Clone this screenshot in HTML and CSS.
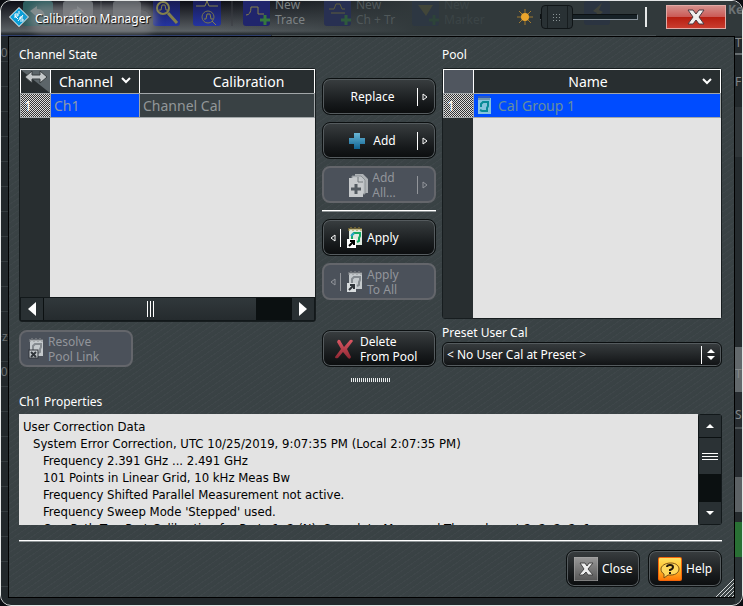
FILE: index.html
```html
<!DOCTYPE html>
<html lang="en">
<head>
<meta charset="utf-8">
<title>Calibration Manager</title>
<link rel="stylesheet" href="styles.css">
</head>
<body>
<svg width="0" height="0" class="defs" aria-hidden="true">
  <defs>
    <pattern id="checker" width="2" height="2" patternUnits="userSpaceOnUse"><path d="M0 0h2v2H0z" fill="#ddd"/><path d="M0 0h1v1H0zM1 1h1v1H1z" fill="#333"/></pattern>
    <linearGradient id="blueTile" x1="0" y1="0" x2="0" y2="1"><stop offset="0" stop-color="#17194c"/><stop offset="1" stop-color="#2434a0"/></linearGradient>
    <linearGradient id="plusFill" x1="0" y1="0" x2="0" y2="1"><stop offset="0" stop-color="#6ab7d6"/><stop offset="1" stop-color="#0e6292"/></linearGradient>
    <linearGradient id="redFill" x1="0" y1="0" x2="0" y2="1"><stop offset="0" stop-color="#dc5864"/><stop offset="1" stop-color="#8e2632"/></linearGradient>
    <linearGradient id="greyFill" x1="0" y1="0" x2="0" y2="1"><stop offset="0" stop-color="#9a9a9a"/><stop offset="1" stop-color="#555"/></linearGradient>
    <linearGradient id="orangeFill" x1="0" y1="0" x2="0" y2="1"><stop offset="0" stop-color="#ffe060"/><stop offset="0.5" stop-color="#ffc02c"/><stop offset="1" stop-color="#ff7a08"/></linearGradient>
    <symbol id="notepad" viewBox="0 0 16 22">
      <rect x="2" y="2" width="13" height="16" fill="#dfe9df"/>
      <path d="M2 1v3M4 0v3M6 1v3M8 0v3M10 1v3M12 0v3M14 1v3" stroke="#a58b34"/>
      <path d="M5 12V8l2-2h6v3l-1 2v3l-2 1" fill="none" stroke="#13a965" stroke-width="2"/>
      <path d="M4 9l3-3" stroke="#27a6c8" stroke-width="2"/>
      <rect x="0" y="12" width="9" height="9" fill="#fff"/>
      <path d="M2 19l4-4M3 14h4v4" fill="none" stroke="#000" stroke-width="2"/>
    </symbol>
    <symbol id="notepad-off" viewBox="0 0 16 22">
      <rect x="2" y="2" width="13" height="16" fill="#c4c9cc"/>
      <path d="M2 1v3M4 0v3M6 1v3M8 0v3M10 1v3M12 0v3M14 1v3" stroke="#8d9092"/>
      <path d="M5 12V8l2-2h6v3l-1 2v3l-2 1" fill="none" stroke="#858b90" stroke-width="2"/>
      <rect x="0" y="12" width="9" height="9" fill="#d8dcde"/>
      <path d="M2 19l4-4M3 14h4v4" fill="none" stroke="#30353a" stroke-width="2"/>
    </symbol>
    <symbol id="notepad-broken" viewBox="0 0 16 22">
      <rect x="2" y="2" width="13" height="16" fill="#c4c9cc"/>
      <path d="M2 1v3M4 0v3M6 1v3M8 0v3M10 1v3M12 0v3M14 1v3" stroke="#8d9092"/>
      <path d="M5 12V8l2-2h6v3l-1 2v3l-2 1" fill="none" stroke="#858b90" stroke-width="2"/>
      <rect x="1" y="12" width="9" height="8" fill="#c4c9cc" stroke="#30353a"/>
      <path d="M3 14l5 5M8 14l-5 5" stroke="#30353a" stroke-width="2"/>
    </symbol>
  </defs>
</svg>

<main class="window">
  <div class="edge edge-left" aria-hidden="true"><svg width="7" height="560"><g fill="#6b7072"><text x="-7" y="20">10</text><text x="1" y="304">z</text><text x="-7" y="339">10</text></g></svg></div>
  <div class="edge edge-right" aria-hidden="true"><svg width="7" height="560"><g fill="#83888a"><text x="0" y="10">T</text><text x="0" y="49">F</text><text x="0" y="341">T</text><text x="0" y="382">S</text></g></svg></div>
  <header class="titlebar">
    <svg class="backdrop" width="743" height="36" aria-hidden="true">
      <rect x="22" y="0" width="30" height="25" rx="3" fill="#2c5c5e"/>
      <path d="M29 10l7-5v3q8 0 8 9-3-5-8-4v3z" fill="#7c8c8c"/>
      <rect x="62" y="0" width="30" height="25" rx="3" fill="#60646a"/>
      <path d="M83 10l-7-5v3q-8 0-8 9 3-5 8-4v3z" fill="#82868a"/>
      <rect x="112" y="0" width="28" height="25" rx="3" fill="#55585e"/>
      <rect x="152" y="-3" width="27" height="28" rx="3" fill="url(#blueTile)"/>
      <circle cx="162" cy="7" r="6" fill="none" stroke="#83804a" stroke-width="2"/>
      <path d="M167 12l9 10" stroke="#83804a" stroke-width="3"/>
      <path d="M158 9h2l1-5h3l1 5h2" fill="none" stroke="#83804a"/>
      <rect x="192" y="-3" width="28" height="28" rx="3" fill="url(#blueTile)"/>
      <circle cx="207" cy="16" r="6" fill="none" stroke="#77754d"/>
      <path d="M195 5h9l2-5 2 5h9M203 18h2l1-5h3l1 5h2M211 20l4 4" fill="none" stroke="#83804a"/>
      <path d="M100 0v25M231 0v25" stroke="#3a3d42"/>
      <rect x="242" y="-3" width="27" height="28" rx="3" fill="#20256c"/>
      <path d="M245 14q5 0 5-8h7v7h6" fill="none" stroke="#85814a"/>
      <path d="M264 14v10M259 19h10" stroke="#35783d" stroke-width="3"/>
      <rect x="323" y="-3" width="27" height="28" rx="3" fill="#283052"/>
      <path d="M330 12h14M328 8h5l2-5h4l2 5h3" fill="none" stroke="#5d5c3c"/>
      <path d="M345 14v10M340 19h10" stroke="#2e5a3c" stroke-width="3"/>
      <rect x="411" y="-3" width="27" height="28" rx="3" fill="#2d3742"/>
      <path d="M417 4h15l-7 11z" fill="#424639"/>
      <path d="M433 14v10M428 19h10" stroke="#2d4339" stroke-width="3"/>
      <rect x="583" y="0" width="26" height="24" rx="3" fill="#2b3441"/>
      <path d="M601 2l-9 8 4 2-5 8 11-9-4-2z" fill="#3f423b"/>
      <g class="backdrop-text">
        <text x="274" y="8" fill="#7d8284">New</text><text x="274" y="23" fill="#7d8284">Trace</text>
        <text x="355" y="8" fill="#50585a">New</text><text x="355" y="23" fill="#50585a">Ch + Tr</text>
        <text x="443" y="8" fill="#3b4446">New</text><text x="443" y="23" fill="#3b4446">Marker</text>
        <text x="727" y="13" fill="#6d7375" font-weight="700">Ke</text>
      </g>
      <path d="M0 34.500h270" stroke="#2d3e6c"/>
      <path d="M271 34.500h384" stroke="#4a5356"/>
    </svg>
    <svg class="logo" width="20" height="20" viewBox="0 0 20 20" aria-hidden="true">
      <path d="M10 0l10 10-10 10L0 10z" fill="#fff"/>
      <path d="M10 1l9 9-9 9-9-9z" fill="#0a9fd8"/>
      <path d="M6 11V7h3v2H6l3 3M14 10h-3v2h3v2h-3M10 4v3M9 14l5-6" fill="none" stroke="#fff"/>
    </svg>
    <h1 class="title"><span>Calibration Manager</span></h1>
    <svg class="sun" width="18" height="18" viewBox="0 0 18 18" aria-hidden="true">
      <path d="M9 1v16M1 9h16M3 3l12 12M15 3L3 15" stroke="#a17a2e"/>
      <circle cx="9" cy="9" r="4" fill="#eaa42c"/>
    </svg>
    <input class="opacity" type="range" min="0" max="100" value="0" aria-label="Transparency">
    <span class="title-rule"></span>
    <button class="window-close" type="button" aria-label="Close window">
      <svg width="18" height="16" viewBox="0 0 18 16"><path d="M1 1h5l3 4 3-4h5l-5 7 5 7h-5l-3-4-3 4H1l5-7z" fill="#f0f0f0" stroke="#4a3b42"/></svg>
    </button>
  </header>

  <div class="panel">
    <div class="upper">
      <h2 class="label">Channel State</h2>
      <span></span>
      <h2 class="label">Pool</h2>

      <div class="frame">
        <div class="list">
          <table>
            <colgroup><col class="col-index"><col class="col-channel"><col></colgroup>
            <thead><tr>
              <th class="corner"><svg width="29" height="23" viewBox="0 0 29 23" aria-label="Resize columns"><path d="M0 0h29v23z" fill="#5c6569"/><path d="M4 7l7-6v4h8V1l7 6-7 6V9h-8v4z" fill="#c4c8c9" stroke="#373d3f"/></svg></th>
              <th class="sort">Channel<svg width="10" height="7" viewBox="0 0 10 7" aria-hidden="true"><path d="M1 1l4 4 4-4" fill="none" stroke="#fff" stroke-width="2"/></svg></th>
              <th class="center">Calibration</th>
            </tr></thead>
            <tbody><tr><th class="index"><svg width="100%" height="100%" shape-rendering="crispEdges" aria-hidden="true"><rect width="100%" height="100%" fill="url(#checker)"/></svg><span>1</span></th><td class="selected">Ch1</td><td class="plain">Channel Cal</td></tr></tbody>
          </table>
        </div>
        <div class="hscroll">
          <button type="button" class="scroll-end" aria-label="Scroll left"><svg width="8" height="14" viewBox="0 0 8 14"><path d="M8 0v14L0 7z" fill="#fff"/></svg></button>
          <div class="hthumb"><i></i><i></i><i></i></div>
          <button type="button" class="scroll-end" aria-label="Scroll right"><svg width="8" height="14" viewBox="0 0 8 14"><path d="M0 0v14l8-7z" fill="#fff"/></svg></button>
        </div>
      </div>

      <div class="actions">
        <button class="btn" type="button"><span class="btn-text">Replace</span><span class="bar"></span><svg width="6" height="8" viewBox="0 0 6 8"><path d="M1 1v6l4-3z" fill="none" stroke="currentColor"/></svg></button>
        <button class="btn" type="button"><span class="btn-text"><svg width="16" height="16" viewBox="0 0 16 16"><path d="M5 0h6v5h5v6h-5v5H5v-5H0V5h5z" fill="url(#plusFill)"/></svg>Add</span><span class="bar"></span><svg width="6" height="8" viewBox="0 0 6 8"><path d="M1 1v6l4-3z" fill="none" stroke="currentColor"/></svg></button>
        <button class="btn" type="button" disabled><span class="btn-text tight"><svg width="19" height="24" viewBox="0 0 19 24"><path d="M6 1h8l5 5v14H6z" fill="#aeb2b5"/><path d="M3 3h9l4 4v14H3z" fill="#bfc3c6" stroke="#8b9094"/><path d="M0 5h9l5 4v15H0z" fill="#c6c9cb"/><path d="M9 4v5h5" fill="none" stroke="#73797d"/><path d="M7 11v10M2 16h10" stroke="#545b61" stroke-width="3"/></svg><span>Add<br>All...</span></span><span class="bar"></span><svg width="6" height="8" viewBox="0 0 6 8"><path d="M1 1v6l4-3z" fill="none" stroke="currentColor"/></svg></button>
        <hr class="rule">
        <button class="btn lead" type="button"><svg width="6" height="8" viewBox="0 0 6 8"><path d="M5 1v6L1 4z" fill="none" stroke="currentColor"/></svg><span class="bar"></span><svg class="pad" width="16" height="22"><use href="#notepad"/></svg>Apply</button>
        <button class="btn lead" type="button" disabled><svg width="6" height="8" viewBox="0 0 6 8"><path d="M5 1v6L1 4z" fill="none" stroke="currentColor"/></svg><span class="bar"></span><svg class="pad" width="16" height="22"><use href="#notepad-off"/></svg><span>Apply<br>To All</span></button>
      </div>

      <div class="frame pool">
        <div class="list">
          <table>
            <colgroup><col class="col-index"><col></colgroup>
            <thead><tr><th class="blank"></th><th class="center name">Name<svg class="caret" width="10" height="7" viewBox="0 0 10 7" aria-hidden="true"><path d="M1 1l4 4 4-4" fill="none" stroke="#fff" stroke-width="2"/></svg></th></tr></thead>
            <tbody><tr><th class="index"><svg width="100%" height="100%" shape-rendering="crispEdges" aria-hidden="true"><rect width="100%" height="100%" fill="url(#checker)"/></svg><span>1</span></th><td class="selected group"><svg width="15" height="18" viewBox="0 0 15 18" aria-hidden="true"><rect x="1" y="2" width="13" height="16" fill="#86c4dc"/><path d="M2 0v4M4 0v4M6 0v4M8 0v4M10 0v4M12 0v4" stroke="#5c6c80"/><path d="M4 11V8l2-2h6M11 7v3l-1 2v3H5l-2-1" fill="none" stroke="#098a96" stroke-width="2"/></svg>Cal Group 1</td></tr></tbody>
          </table>
        </div>
      </div>

      <div class="resolve">
        <button class="btn lead" type="button" disabled><svg width="16" height="22"><use href="#notepad-broken"/></svg><span>Resolve<br>Pool Link</span></button>
      </div>
      <div class="delete">
        <button class="btn lead" type="button"><svg width="18" height="20" viewBox="0 0 18 20"><path d="M3 1q2-1 3 2l3 5 6-7q2-1 3 1l-6 8 4 8q-1 3-3 1l-5-6-5 6q-3 1-3-1l6-8-4-7z" fill="url(#redFill)"/></svg><span>Delete<br>From Pool</span></button>
      </div>
      <div class="preset">
        <label class="label" for="preset">Preset User Cal</label>
        <div class="select">
          <select id="preset"><option>&lt; No User Cal at Preset &gt;</option></select>
          <svg width="14" height="18" viewBox="0 0 14 18" aria-hidden="true"><path d="M0 0h1v18H0zM6 7l4-4 4 4zM6 10h8l-4 4z" fill="#fff"/></svg>
        </div>
      </div>
    </div>

    <div class="grip" role="separator" aria-label="Resize properties"></div>

    <section class="properties">
      <h2 class="label">Ch1 Properties</h2>
      <div class="report">
        <div class="report-text">
          <p>User Correction Data</p>
          <p class="in1">System Error Correction, UTC 10/25/2019, 9:07:35 PM (Local 2:07:35 PM)</p>
          <p class="in2">Frequency 2.391 GHz ... 2.491 GHz</p>
          <p class="in2">101 Points in Linear Grid, 10 kHz Meas Bw</p>
          <p class="in2">Frequency Shifted Parallel Measurement not active.</p>
          <p class="in2">Frequency Sweep Mode 'Stepped' used.</p>
          <p class="in2">One Path Two Port Calibration for Ports 1, 2 (N), Sound. to Measured Through port 2, 2, 2, 2, 1</p>
        </div>
        <div class="vscroll">
          <button type="button" class="scroll-end" aria-label="Scroll up"><svg width="8" height="4" viewBox="0 0 8 4"><path d="M0 4h8L4 0z" fill="#fff"/></svg></button>
          <div class="vthumb"><i></i><i></i><i></i></div>
          <span class="vspace"></span>
          <button type="button" class="scroll-end" aria-label="Scroll down"><svg width="8" height="4" viewBox="0 0 8 4"><path d="M0 0h8L4 4z" fill="#fff"/></svg></button>
        </div>
      </div>
    </section>

    <hr class="rule">
    <footer class="footer">
      <button class="btn lead" type="button"><svg width="24" height="24" viewBox="0 0 24 24"><path d="M0 0h24v24H0z" fill="url(#greyFill)" stroke="#aaa"/><path d="M6 6h5l2 3 2-3h4l-5 6 5 6h-5l-2-3-3 3H5l5-6z" fill="#eee" stroke="#444"/></svg>Close</button>
      <button class="btn lead help" type="button"><svg width="24" height="24" viewBox="0 0 24 24"><rect width="24" height="24" rx="2" fill="#f4660a"/><rect x="1" y="1" width="22" height="22" rx="1" fill="url(#orangeFill)"/><path d="M13 6c5 0 8 3 8 6s-3 6-8 6l-3 0-4 3v-4c-2-1-3-3-3-5 0-3 4-6 10-6z" fill="#ffd85c" stroke="#7b5115"/><path d="M9 10q0-2 3-2t3 2-3 3v1M12 15v2" fill="none" stroke="#20180c" stroke-width="2"/></svg>Help</button>
    </footer>
    <svg class="resize" width="18" height="18" viewBox="0 0 18 18" aria-hidden="true"><path d="M0 18L18 0M4 18L18 4M8 18L18 8M12 18l6-6M16 18l2-2" stroke="#d4d7d8"/></svg>
  </div>
</main>
</body>
</html>
```
FILE: styles.css
```css
* { box-sizing: border-box; }
body {
  margin: 0;
  background: #0c0d12;
  color: #fff;
  font: 12px/15px "Noto Sans", "Open Sans", sans-serif;
}
h1, h2, p, hr { margin: 0; }
h1, h2 { font-size: 12px; font-weight: 400; }
button, select, input { font: inherit; margin: 0; }
svg { flex: none; }
.defs { position: absolute; }

.window {
  position: relative;
  display: flex;
  flex-direction: column;
  min-height: 100vh;
  padding: 0 7px 7px;
  border: 1px solid #e4e6e6;
  border-radius: 11px;
  background: #22282b;
  overflow: hidden;
}
.edge { position: absolute; top: 36px; bottom: 0; width: 7px; overflow: hidden; }
.edge-left { left: 0; background: repeating-linear-gradient(#22282b 0 24px, #343b3e 24px 25px); }
.edge-right {
  right: 0;
  background: linear-gradient(#23292c 0 16px, #666c6f 16px 18px, #23292c 18px 70px, #303639 70px 120px, #252b2e 120px 310px, #62686b 310px 355px, #272c30 355px 390px, #4b5154 390px 392px, #272c30 392px 440px, #5c6164 440px 475px, #252a2d 475px 485px, #297034 485px 520px, #2c3437 520px);
}

.titlebar {
  position: relative;
  display: flex;
  align-items: center;
  height: 35px;
  margin: 0 -7px;
  padding: 0 16px 4px 8px;
  background: linear-gradient(90deg, #31393b00 210px, #31393b 420px), linear-gradient(#0d0e16, #5a6064 30px, #272d31 33px);
}
.titlebar > * { position: relative; }
.titlebar .backdrop { position: absolute; left: 0; top: 0; }
.backdrop-text { font-size: 12px; }
.title {
  flex: 1;
  margin-left: 6px;
  padding-top: 4px;
  text-shadow: 1px 1px 1px #000;
}
.title span {
  border-radius: 8px;
  background: #8a8d90a0;
  box-shadow: 0 0 8px 6px #8a8d90a0;
}
.sun { margin-right: 6px; }
.opacity {
  width: 98px;
  height: 24px;
  appearance: none;
  background: none;
}
.opacity::-webkit-slider-runnable-track {
  height: 6px;
  border: 1px solid #0c1113;
  border-right-color: #88929a;
  border-bottom-color: #88929a;
  background: #172126;
}
.opacity::-webkit-slider-thumb {
  appearance: none;
  width: 32px;
  height: 24px;
  margin-top: -10px;
  border: 1px solid #101517;
  border-radius: 4px;
  background:
    repeating-linear-gradient(90deg, #8b9496 0 1px, #0000 1px 3px) 11px 8px / 9px 1px no-repeat,
    repeating-linear-gradient(90deg, #8b9496 0 1px, #0000 1px 3px) 11px 11px / 9px 1px no-repeat,
    repeating-linear-gradient(90deg, #8b9496 0 1px, #0000 1px 3px) 11px 14px / 9px 1px no-repeat,
    linear-gradient(90deg, #293134 5px, #171d1f 5px 6px, #293134 6px 25px, #171d1f 25px 26px, #293134 26px);
}
.title-rule { width: 2px; height: 20px; margin: 0 19px 0 7px; background: #e6e8e8; }
.window-close {
  display: grid;
  place-items: center;
  width: 60px;
  height: 24px;
  padding: 0;
  border: 1px solid #e3aaa6;
  background: linear-gradient(#d58f8b, #cb5b57 48%, #b61d10 50%, #c93c2e);
}

.panel {
  position: relative;
  flex: 1;
  display: flex;
  flex-direction: column;
  padding: 10px 12px 10px 10px;
  border: 1px solid #000;
  background: repeating-linear-gradient(145deg, #394244 0 2px, #3e4649 2px 3px, #3a4245 3px 5px);
}
.upper {
  flex: 1;
  display: grid;
  grid-template-columns: minmax(0, 297fr) 114px minmax(0, 280fr);
  grid-template-rows: 21px 1fr auto;
  column-gap: 6px;
}
.frame {
  display: flex;
  flex-direction: column;
  border: 1px solid #171d1f;
  border-radius: 3px;
  background: #293032;
}
.pool { margin-bottom: 3px; }
.list { flex: 1; background: linear-gradient(90deg, #282e30 30px, #e3e3e3 30px); }
table {
  width: 100%;
  border-collapse: collapse;
  table-layout: fixed;
  font-size: 14px;
  line-height: 20px;
}
.col-index { width: 30px; }
.col-channel { width: 89px; }
th, td { height: 24px; padding: 0 3px; text-align: left; font-weight: 400; }
thead th { background: #282e30; border: 1px solid #fff; border-bottom-color: #a2a7a9; }
tbody th, tbody td { border: 1px solid #a2a7a9; }
thead .corner { padding: 0; }
.corner svg { display: block; }
.sort { padding-left: 8px; }
.sort svg { margin-left: 8px; vertical-align: 3px; }
thead .center { text-align: center; padding-left: 46px; }
thead .name { position: relative; padding: 0 18px 0 0; }
.caret { position: absolute; right: 8px; top: 8px; }
thead .blank { background: #50565f; }
.index { position: relative; color: #fff; }
.index svg { position: absolute; inset: 0; }
.index span { position: relative; }
.selected { background: #004cff; color: #8e9aaa; }
.plain { background: #394144; color: #929799; }
.group svg { margin-right: 6px; vertical-align: -3px; }
tbody .group { color: #668f9c; }

.hscroll {
  display: flex;
  height: 24px;
  justify-content: space-between;
  border: 1px solid #12181a;
  background: #0b1011;
}
.scroll-end {
  display: grid;
  place-items: center;
  width: 22px;
  padding: 0;
  border: 0;
  background: #293033;
}
.hthumb {
  flex: 1;
  display: flex;
  justify-content: center;
  align-items: center;
  gap: 2px;
  margin: 0 36px 0 1px;
  background: linear-gradient(#31383b, #252b2e);
}
.hthumb i { width: 1px; height: 16px; background: #fff; }

.actions { display: flex; flex-direction: column; gap: 7px; padding-top: 10px; }
.btn {
  display: flex;
  align-items: center;
  width: 114px;
  height: 37px;
  padding: 0 7px;
  border: 1px solid #0b0f10;
  border-radius: 8px;
  box-shadow: inset 0 0 0 1px #555b5e;
  background: linear-gradient(#393e40, #16191b 70%, #0b0d0e);
  color: #fff;
  line-height: 15px;
  text-align: left;
}
.btn:disabled {
  color: #92959a;
  border: 2px solid #64666b;
  padding: 0 6px;
  box-shadow: none;
  background: #4b515a;
}
.btn-text { flex: 1; display: flex; align-items: center; justify-content: center; gap: 8px; padding-right: 2px; }
.tight { gap: 4px; }
.bar { width: 1px; height: 18px; margin-right: 4px; background: currentColor; }
.lead { gap: 4px; }
.lead .bar { margin: 0; }
.pad { margin-left: 2px; }
.rule { height: 2px; border: 0; background: linear-gradient(#fff 1px, #8f9597 1px); }
.resolve, .delete { padding-top: 8px; }
.delete .btn { gap: 7px; padding-left: 12px; }
.resolve .btn { padding-left: 7px; gap: 4px; }
.preset { padding-top: 3px; }
.preset .label { display: block; margin-bottom: 2px; }
.select { position: relative; }
.select select {
  display: block;
  width: 100%;
  height: 25px;
  padding: 0 28px 0 4px;
  appearance: none;
  border: 1px solid #0b0f10;
  border-radius: 6px;
  box-shadow: inset 0 0 0 1px #555b5e;
  background: linear-gradient(#383d3f, #101214);
  color: #fff;
}
.select svg { position: absolute; right: 7px; top: 4px; }
.grip {
  align-self: center;
  width: 40px;
  height: 4px;
  margin: 11px 0 12px;
  background: repeating-linear-gradient(90deg, #e8eaea 0 1px, #394245 1px 2px);
}
.properties .label { padding-bottom: 5px; }
.report { display: flex; height: 111px; }
.report-text {
  flex: 1;
  overflow: hidden;
  padding: 4px;
  background: #e3e3e3;
  color: #000;
  font: 13px/17px "DejaVu Sans Condensed", "Liberation Sans", sans-serif;
  white-space: nowrap;
}
.in1 { padding-left: 10px; }
.in2 { padding-left: 20px; }
.vscroll {
  display: flex;
  flex-direction: column;
  width: 24px;
  border: 1px solid #12181a;
  border-radius: 3px;
  background: #0b1011;
}
.vscroll .scroll-end { width: 22px; height: 22px; }
.vthumb {
  display: flex;
  flex-direction: column;
  align-items: center;
  justify-content: center;
  gap: 2px;
  height: 36px;
  margin-top: 1px;
  background: #2b3235;
}
.vthumb i { width: 16px; height: 1px; background: #fff; }
.vspace { flex: 1; }
.panel > .rule { margin: 15px 0 8px; }
.footer { display: flex; justify-content: flex-end; gap: 8px; }
.footer .btn { width: 74px; }
.footer .help { padding-left: 9px; }
.resize { position: absolute; right: 0; bottom: 0; }
```
